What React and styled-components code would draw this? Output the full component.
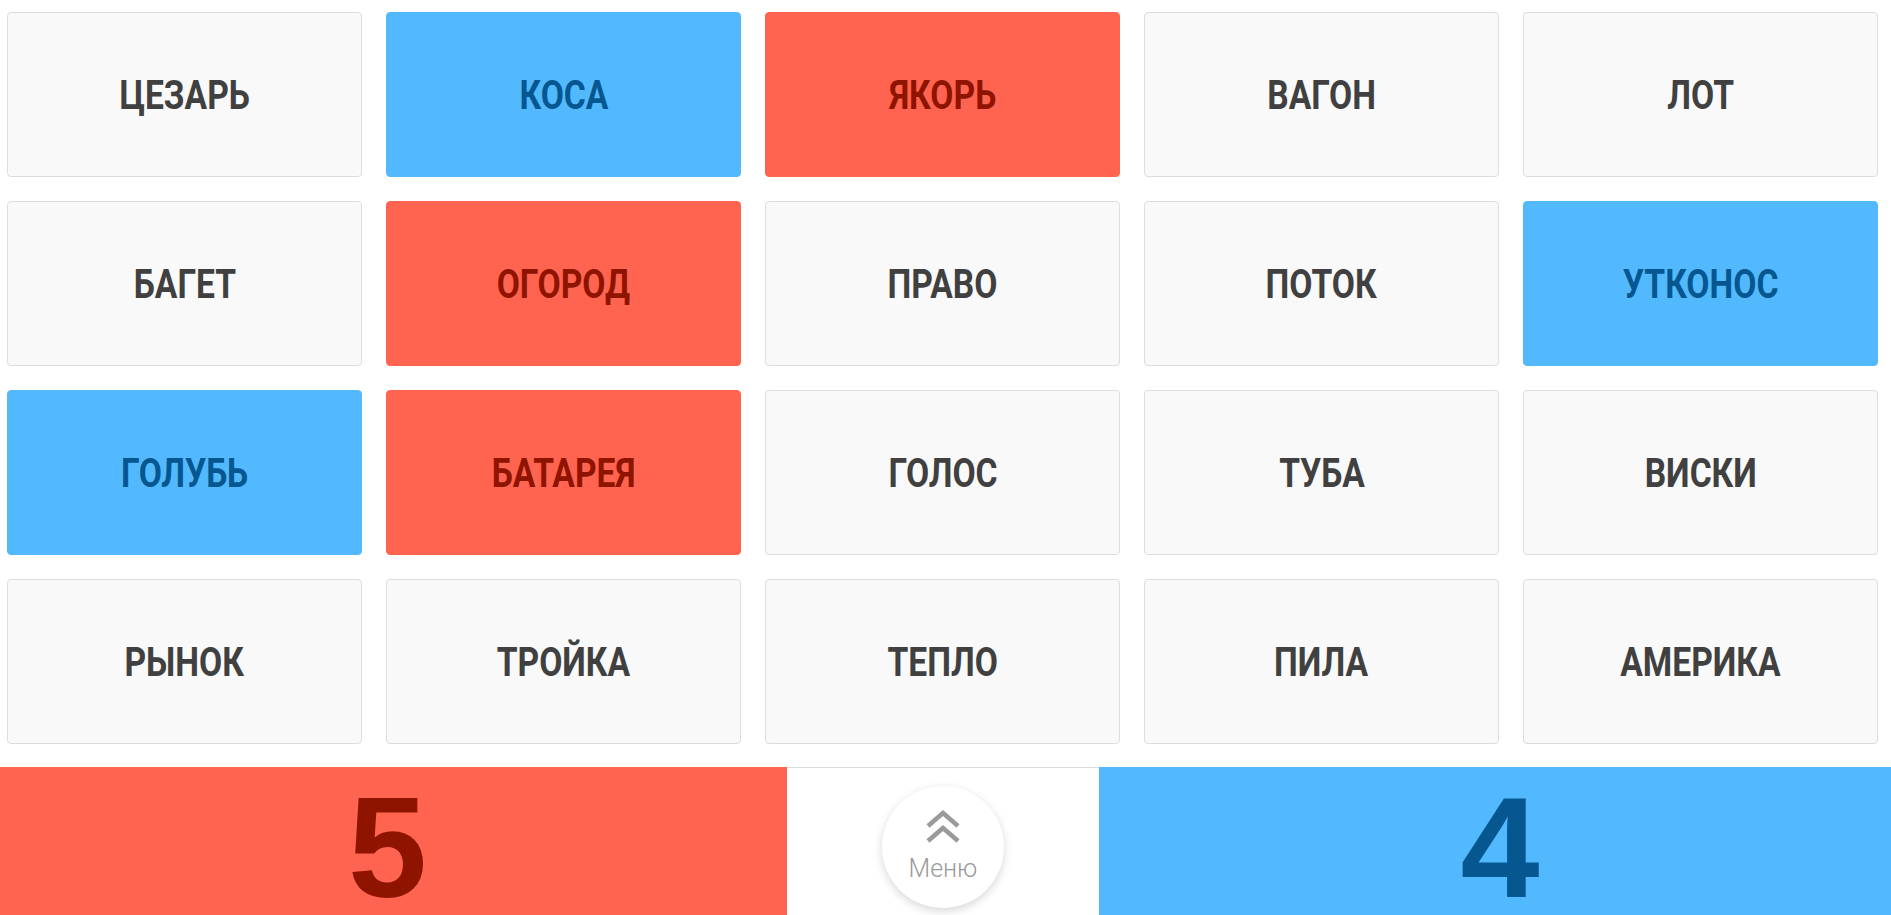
import styled, { createGlobalStyle } from 'styled-components';

const GlobalStyle = createGlobalStyle`
  html, body {
    margin: 0;
    padding: 0;
    background: #fff;
    overflow: hidden;
  }
  body {
    font-family: Roboto, "Liberation Sans", sans-serif;
  }
  * {
    box-sizing: border-box;
  }
`;

const words = [
  ['ЦЕЗАРЬ', 'n'], ['КОСА', 'b'], ['ЯКОРЬ', 'r'], ['ВАГОН', 'n'], ['ЛОТ', 'n'],
  ['БАГЕТ', 'n'], ['ОГОРОД', 'r'], ['ПРАВО', 'n'], ['ПОТОК', 'n'], ['УТКОНОС', 'b'],
  ['ГОЛУБЬ', 'b'], ['БАТАРЕЯ', 'r'], ['ГОЛОС', 'n'], ['ТУБА', 'n'], ['ВИСКИ', 'n'],
  ['РЫНОК', 'n'], ['ТРОЙКА', 'n'], ['ТЕПЛО', 'n'], ['ПИЛА', 'n'], ['АМЕРИКА', 'n'],
];

const palette = {
  n: { bg: '#f9f9f9', border: '#dddddd', text: '#404040' },
  b: { bg: '#52b9fe', border: '#52b9fe', text: '#06578f' },
  r: { bg: '#ff6450', border: '#ff6450', text: '#8e1400' },
};

export default function App() {
  return (
    <>
      <GlobalStyle />
      <Page>
        <Board>
          {words.map(([word, team]) => (
            <Card key={word} $team={team}>
              <Word $team={team}>{word}</Word>
            </Card>
          ))}
        </Board>

        <Footer>
          <Score $team="r">5</Score>
          <Middle>
            <MenuButton>
              <svg width="36" height="34" viewBox="0 0 36 34" fill="none"
                stroke="#9a9a9a" strokeWidth="4.5" strokeLinecap="butt" strokeLinejoin="miter">
                <polyline points="3,16 18,3 33,16" />
                <polyline points="3,31 18,18 33,31" />
              </svg>
              <MenuLabel>Меню</MenuLabel>
            </MenuButton>
          </Middle>
          <Score $team="b">4</Score>
        </Footer>
      </Page>
    </>
  );
}

const Page = styled.div`
  width: 1891px;
  height: 915px;
  display: flex;
  flex-direction: column;
`;

const Board = styled.div`
  display: grid;
  grid-template-columns: repeat(5, 355px);
  grid-auto-rows: 165px;
  column-gap: 24px;
  row-gap: 24px;
  padding: 12px 0 0 7px;
`;

const Card = styled.div`
  display: flex;
  align-items: center;
  justify-content: center;
  background: ${p => palette[p.$team].bg};
  border: 1px solid ${p => palette[p.$team].border};
  border-radius: 4px;
`;

const Word = styled.span`
  font-family: Roboto, "Liberation Sans", sans-serif;
  font-weight: 700;
  font-size: 40px;
  line-height: 1;
  color: ${p => palette[p.$team].text};
  display: inline-block;
  transform: scaleX(0.84);
  margin-top: 2px;
`;

const Footer = styled.div`
  margin-top: 23px;
  flex: 1;
  display: flex;
  overflow: hidden;
`;

const Score = styled.div`
  flex: ${p => (p.$team === 'r' ? '0 0 787px' : '1')};
  background: ${p => palette[p.$team].bg};
  color: ${p => palette[p.$team].text};
  display: flex;
  justify-content: center;
  align-items: flex-start;
  font-family: "Liberation Sans", Arial, sans-serif;
  font-weight: 700;
  font-size: 142px;
  line-height: 0.8;
  padding-top: 24px;
  padding-right: ${p => (p.$team === 'r' ? '12px' : '0')};
  padding-left: ${p => (p.$team === 'b' ? '10px' : '0')};
`;

const Middle = styled.div`
  flex: 0 0 312px;
  border-top: 1px solid #dcdcdc;
  display: flex;
  justify-content: center;
  padding-top: 18px;
`;

const MenuButton = styled.div`
  width: 122px;
  height: 122px;
  border-radius: 50%;
  background: #fff;
  box-shadow: 0 3px 10px rgba(0, 0, 0, 0.16);
  display: flex;
  flex-direction: column;
  align-items: center;
  padding-top: 24px;
`;

const MenuLabel = styled.div`
  font-family: Roboto, "Liberation Sans", sans-serif;
  font-weight: 300;
  font-size: 25px;
  color: #9a9a9a;
  line-height: 1;
  margin-top: 12px;
`;
